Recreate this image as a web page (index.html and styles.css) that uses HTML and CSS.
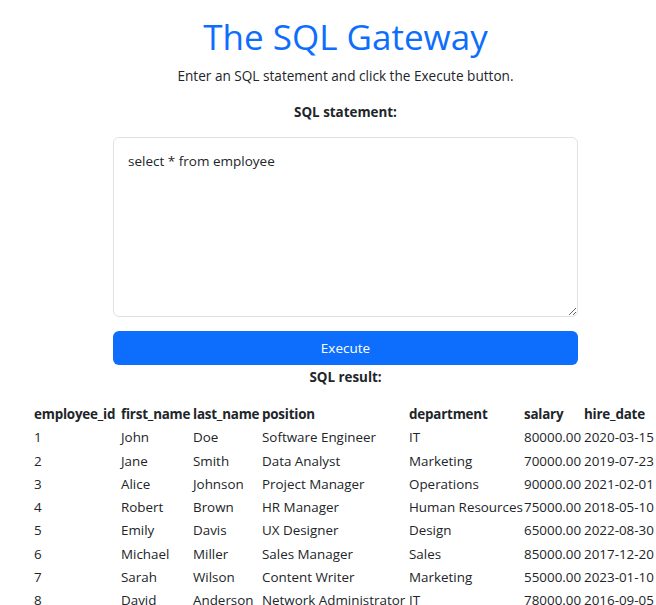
FILE: index.html
```html
<!DOCTYPE html>
<html lang="en">
<head>
<meta charset="utf-8">
<title>The SQL Gateway</title>
<link rel="stylesheet" href="styles.css">
</head>
<body>
<main class="page">
  <h1 class="title">The SQL Gateway</h1>
  <p class="intro">Enter an SQL statement and click the Execute button.</p>
  <form class="sql-form">
    <label class="label" for="sql">SQL statement:</label>
    <textarea id="sql" class="sql-input">select * from employee</textarea>
    <button type="button" class="btn">Execute</button>
  </form>
  <p class="label result-label">SQL result:</p>
  <table class="result">
    <colgroup>
      <col class="c1"><col class="c2"><col class="c3"><col class="c4"><col class="c5"><col class="c6"><col class="c7">
    </colgroup>
    <thead>
      <tr><th>employee_id</th><th>first_name</th><th>last_name</th><th>position</th><th>department</th><th>salary</th><th>hire_date</th></tr>
    </thead>
    <tbody>
      <tr><td>1</td><td>John</td><td>Doe</td><td>Software Engineer</td><td>IT</td><td>80000.00</td><td>2020-03-15</td></tr>
      <tr><td>2</td><td>Jane</td><td>Smith</td><td>Data Analyst</td><td>Marketing</td><td>70000.00</td><td>2019-07-23</td></tr>
      <tr><td>3</td><td>Alice</td><td>Johnson</td><td>Project Manager</td><td>Operations</td><td>90000.00</td><td>2021-02-01</td></tr>
      <tr><td>4</td><td>Robert</td><td>Brown</td><td>HR Manager</td><td>Human Resources</td><td>75000.00</td><td>2018-05-10</td></tr>
      <tr><td>5</td><td>Emily</td><td>Davis</td><td>UX Designer</td><td>Design</td><td>65000.00</td><td>2022-08-30</td></tr>
      <tr><td>6</td><td>Michael</td><td>Miller</td><td>Sales Manager</td><td>Sales</td><td>85000.00</td><td>2017-12-20</td></tr>
      <tr><td>7</td><td>Sarah</td><td>Wilson</td><td>Content Writer</td><td>Marketing</td><td>55000.00</td><td>2023-01-10</td></tr>
      <tr><td>8</td><td>David</td><td>Anderson</td><td>Network Administrator</td><td>IT</td><td>78000.00</td><td>2016-09-05</td></tr>
      <tr><td>9</td><td>Laura</td><td>Thomas</td><td>Accountant</td><td>Finance</td><td>60000.00</td><td>2019-11-11</td></tr>
    </tbody>
  </table>
</main>
</body>
</html>
```
FILE: styles.css
```css
html, body {
  margin: 0;
  padding: 0;
  overflow: hidden;
  background: #fff;
}
body {
  font-family: "Open Sans", "Noto Sans", sans-serif;
  font-size: 13.5px;
  color: #212529;
}
.page {
  width: 629px;
  margin-left: 31px;
  display: flex;
  flex-direction: column;
  align-items: center;
}
.title {
  margin: 14px 0 0;
  font-size: 35px;
  font-weight: 500;
  line-height: 46px;
  color: #0d6efd;
}
.intro {
  margin: 5px 0 0;
  font-size: 13.6px;
  line-height: 22px;
}
.sql-form {
  display: flex;
  flex-direction: column;
  align-items: center;
  width: 465px;
}
.label {
  font-weight: 700;
  font-size: 13.4px;
  line-height: 22px;
}
.sql-form .label {
  margin-top: 14px;
}
.sql-input {
  box-sizing: border-box;
  width: 465px;
  height: 180px;
  margin-top: 14px;
  padding: 12px 14px;
  border: 1px solid #dee2e6;
  border-radius: 6px;
  font-family: inherit;
  font-size: 13.5px;
  line-height: 22px;
  color: #212529;
  resize: vertical;
}
.btn {
  box-sizing: border-box;
  width: 465px;
  height: 34px;
  margin-top: 14px;
  border: 0;
  border-radius: 6px;
  background: #0d6efd;
  color: #fff;
  font-family: inherit;
  font-size: 13.5px;
}
.result-label {
  margin: 1px 0 0;
}
.result {
  margin-top: 14px;
  width: 629px;
  table-layout: fixed;
  border-collapse: separate;
  border-spacing: 2px;
  font-size: 13.4px;
}
.result th, .result td {
  padding: 1px;
  text-align: left;
  white-space: nowrap;
  line-height: 19.3px;
}
.result th {
  font-weight: 700;
  letter-spacing: -0.2px;
}
.c1 { width: 85px; }
.c2 { width: 70px; }
.c3 { width: 67px; }
.c4 { width: 145px; }
.c5 { width: 113px; }
.c6 { width: 58px; }
.c7 { width: 75px; }
```
